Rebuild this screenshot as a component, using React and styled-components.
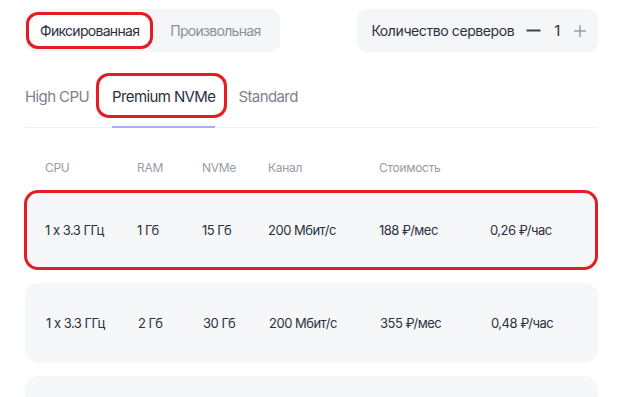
import styled, { createGlobalStyle } from "styled-components";

const GlobalStyle = createGlobalStyle`
  body {
    margin: 0;
    background: #ffffff;
    font-family: Inter, "Noto Sans", sans-serif;
    color: #2e3342;
  }
`;

const MARK = "#e41c23";

const rows = [
  { cpu: "1 x 3.3 ГГц", ram: "1 Гб", disk: "15 Гб", net: "200 Мбит/с", month: "188 ₽/мес", hour: "0,26 ₽/час", marked: true },
  { cpu: "1 x 3.3 ГГц", ram: "2 Гб", disk: "30 Гб", net: "200 Мбит/с", month: "355 ₽/мес", hour: "0,48 ₽/час" },
];

const MinusIcon = () => (
  <svg width="15" height="15" viewBox="0 0 15 15">
    <line x1="0.5" y1="7.5" x2="14.5" y2="7.5" stroke="#3a4050" strokeWidth="2" />
  </svg>
);

const PlusIcon = () => (
  <svg width="12" height="12" viewBox="0 0 12 12">
    <line x1="0" y1="6" x2="12" y2="6" stroke="#8d929c" strokeWidth="1.3" />
    <line x1="6" y1="0" x2="6" y2="12" stroke="#8d929c" strokeWidth="1.3" />
  </svg>
);

const App = () => {
  return (
    <Page>
      <GlobalStyle />
      <TopBar>
        <Segmented>
          <Segment active>Фиксированная</Segment>
          <Segment>Произвольная</Segment>
        </Segmented>
        <Counter>
          <CounterLabel>Количество серверов</CounterLabel>
          <CounterButton>
            <MinusIcon />
          </CounterButton>
          <CounterValue>1</CounterValue>
          <CounterButton>
            <PlusIcon />
          </CounterButton>
        </Counter>
      </TopBar>

      <Tabs>
        <Tab>High CPU</Tab>
        <Tab active>Premium NVMe</Tab>
        <Tab>Standard</Tab>
      </Tabs>

      <Header>
        <span>CPU</span>
        <span>RAM</span>
        <span>NVMe</span>
        <span>Канал</span>
        <span>Стоимость</span>
        <span />
      </Header>

      <List>
        {rows.map((r, i) => (
          <Card key={i} marked={r.marked}>
            <span>{r.cpu}</span>
            <span>{r.ram}</span>
            <span>{r.disk}</span>
            <span>{r.net}</span>
            <span>{r.month}</span>
            <span>{r.hour}</span>
          </Card>
        ))}
        <Card />
      </List>
    </Page>
  );
};

const Page = styled.div`
  width: 573px;
  padding: 9px 0 0 25px;
  height: 388px;
  overflow: hidden;
`;

const TopBar = styled.div`
  display: flex;
  justify-content: space-between;
  align-items: center;
`;

const Segmented = styled.div`
  display: flex;
  align-items: center;
  height: 43px;
  box-sizing: border-box;
  padding: 3px 3px 3px 1px;
  background: #f5f6f8;
  border-radius: 10px;
`;

const Segment = styled.div`
  height: ${(p) => (p.active ? "37px" : "auto")};
  box-sizing: border-box;
  display: flex;
  align-items: center;
  padding: ${(p) => (p.active ? "0 11px" : "0 16px 0 17px")};
  font-size: 14px;
  letter-spacing: -0.7px;
  color: ${(p) => (p.active ? "#2b3040" : "#8a909b")};
  background: ${(p) => (p.active ? "#ffffff" : "transparent")};
  border: ${(p) => (p.active ? `3px solid ${MARK}` : "none")};
  border-radius: 12px;
`;

const Counter = styled.div`
  display: flex;
  align-items: center;
  height: 43px;
  box-sizing: border-box;
  padding: 0 12px 0 14px;
  background: #f5f6f8;
  border-radius: 10px;
  font-size: 14px;
  letter-spacing: -0.4px;
`;

const CounterLabel = styled.span`
  color: #2b3040;
  margin-right: 12px;
`;

const CounterButton = styled.span`
  display: flex;
  align-items: center;
`;

const CounterValue = styled.span`
  margin: 0 14px 0 13px;
  font-size: 15px;
  color: #2b3040;
`;

const Tabs = styled.div`
  display: flex;
  gap: 23px;
  margin-top: 36px;
  border-bottom: 1px solid #eef0f3;
`;

const Tab = styled.div`
  position: relative;
  font-size: 15px;
  line-height: 18px;
  letter-spacing: -0.6px;
  padding-bottom: 20px;
  margin-bottom: -1px;
  color: ${(p) => (p.active ? "#2b3040" : "#7c828e")};
  border-bottom: 2px solid ${(p) => (p.active ? "#a9abf6" : "transparent")};

  &::after {
    content: "";
    display: ${(p) => (p.active ? "block" : "none")};
    position: absolute;
    top: -15px;
    bottom: 8px;
    left: -16px;
    right: -12px;
    border: 3px solid ${MARK};
    border-radius: 13px;
  }
`;

const columns = "92px 65px 66px 111px 111px 1fr";

const Header = styled.div`
  display: grid;
  grid-template-columns: ${columns};
  padding: 0 20px;
  margin-top: 32px;
  font-size: 12px;
  line-height: 16px;
  letter-spacing: -0.3px;
  color: #979ca6;
`;

const List = styled.div`
  display: flex;
  flex-direction: column;
  gap: 13px;
  margin-top: 14px;
`;

const Card = styled.div`
  display: grid;
  grid-template-columns: ${columns};
  align-items: center;
  height: 80px;
  flex-shrink: 0;
  box-sizing: border-box;
  padding: 0 ${(p) => (p.marked ? "18px" : "21px")};
  margin-left: ${(p) => (p.marked ? "-1px" : "0")};
  background: #f6f7f9;
  border: ${(p) => (p.marked ? `3px solid ${MARK}` : "none")};
  border-radius: 14px;
  font-size: 13px;
  letter-spacing: -0.5px;
  color: #2b3040;
`;

export default App;
